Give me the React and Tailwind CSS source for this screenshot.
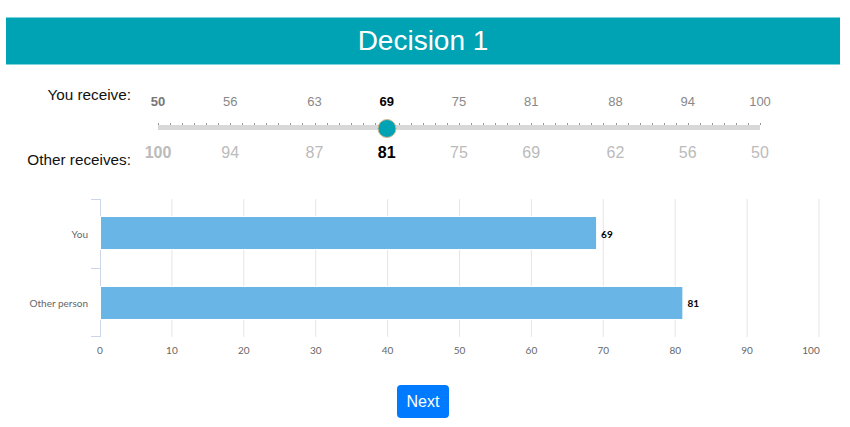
import React from "react";

const youValues = [50, 56, 63, 69, 75, 81, 88, 94, 100];
const selected = 69;

// slider track spans 158px..760px on the page for values 50..100
const X0 = 158;
const X1 = 760;
const posOf = (v) => ((v - 50) / 50) * (X1 - X0);

const chartX = (v) => 100 + v * 7.19;

function SliderScale() {
  const ticks = [];
  for (let v = 50; v <= 100; v++) ticks.push(v);

  return (
    <div className="relative w-[602px] h-[115px]">
      {youValues.map((v) => (
        <span
          key={"y" + v}
          className={`absolute top-[28px] -translate-x-1/2 text-[13px] leading-[18px] ${
            v === selected ? "font-bold text-black" : v === 50 ? "font-bold text-[#777]" : "text-[#888]"
          }`}
          style={{ left: posOf(v) }}
        >
          {v}
        </span>
      ))}

      {ticks.map((v) => (
        <span
          key={"t" + v}
          className="absolute top-[58px] w-px h-[2px] bg-[#999]"
          style={{ left: posOf(v) }}
        />
      ))}

      <div className="absolute left-0 top-[60px] w-[602px] h-[5px] bg-[#d8d8d8]" />

      <div
        className="absolute top-[54px] -translate-x-1/2 w-[19px] h-[19px] rounded-full bg-[#00a3b4] border-[1.5px] border-[#d2b48a]"
        style={{ left: posOf(selected) + 0.5 }}
      />

      {youValues.map((v) => {
        const other = 150 - v;
        return (
          <span
            key={"o" + v}
            className={`absolute top-[78px] -translate-x-1/2 text-[16px] leading-[20px] ${
              v === selected ? "font-bold text-black" : v === 50 ? "font-bold text-[#bbb]" : "text-[#bbb]"
            }`}
            style={{ left: posOf(v) }}
          >
            {other}
          </span>
        );
      })}
    </div>
  );
}

function BarChart() {
  const grid = [1, 2, 3, 4, 5, 6, 7, 8, 9, 10];
  const bars = [
    { label: "You", value: 69, y: 26, ly: 45 },
    { label: "Other person", value: 81, y: 96, ly: 114 },
  ];

  return (
    <svg width="850" height="172" className="block" style={{ fontFamily: "Lato, 'Liberation Sans', sans-serif" }}>
      {grid.map((i) => (
        <line key={i} x1={chartX(i * 10)} x2={chartX(i * 10)} y1="9" y2="147" stroke="#e6e6e6" strokeWidth="1" />
      ))}
      <line x1="100.5" x2="100.5" y1="9" y2="147" stroke="#ccd6eb" strokeWidth="1" />
      {[9.5, 78.5, 146.5].map((y) => (
        <line key={y} x1="91" x2="100" y1={y} y2={y} stroke="#ccd6eb" strokeWidth="1" />
      ))}

      {bars.map((b) => (
        <g key={b.label}>
          <rect
            x="100.5"
            y={b.y + 0.5}
            width={chartX(b.value) - 100}
            height="33"
            fill="#69b5e6"
            stroke="#ffffff"
            strokeWidth="1"
          />
          <text x="88" y={b.ly} textAnchor="end" fontSize="10" fill="#666666" dominantBaseline="middle">
            {b.label}
          </text>
          <text
            x={chartX(b.value) + 5}
            y={b.ly}
            fontSize="10"
            fontWeight="bold"
            fill="#000000"
            dominantBaseline="middle"
          >
            {b.value}
          </text>
        </g>
      ))}

      {[0, ...grid].map((i) => (
        <text
          key={"x" + i}
          x={i === 10 ? chartX(100) - 8 : chartX(i * 10)}
          y="161"
          textAnchor="middle"
          fontSize="10"
          fill="#666666"
          dominantBaseline="middle"
        >
          {i * 10}
        </text>
      ))}
    </svg>
  );
}

export default function App() {
  return (
    <div className="w-[850px] h-[427px] bg-white pt-[17px] overflow-hidden" style={{ fontFamily: "'Liberation Sans', Arial, sans-serif" }}>
      <header className="mx-[6px] w-[834px] h-[48px] bg-[#00a3b4] border-y border-[#7fd3dc] flex items-center justify-center">
        <h1 className="text-[28px] leading-none text-white">Decision 1</h1>
      </header>

      <section className="flex h-[115px]">
        <div className="w-[131px] flex flex-col items-end text-[15.3px] text-[#111]">
          <span className="mt-[21px] leading-[18px]">You receive:</span>
          <span className="mt-[47px] leading-[18px]">Other receives:</span>
        </div>
        <div className="ml-[27px]">
          <SliderScale />
        </div>
      </section>

      <div className="mt-[10px]">
        <BarChart />
      </div>

      <div className="flex justify-center mt-[23px] pr-[4px]">
        <button type="button" className="w-[52px] h-[33px] rounded-[4px] bg-[#007bff] text-white text-[16px] leading-none">
          Next
        </button>
      </div>
    </div>
  );
}
